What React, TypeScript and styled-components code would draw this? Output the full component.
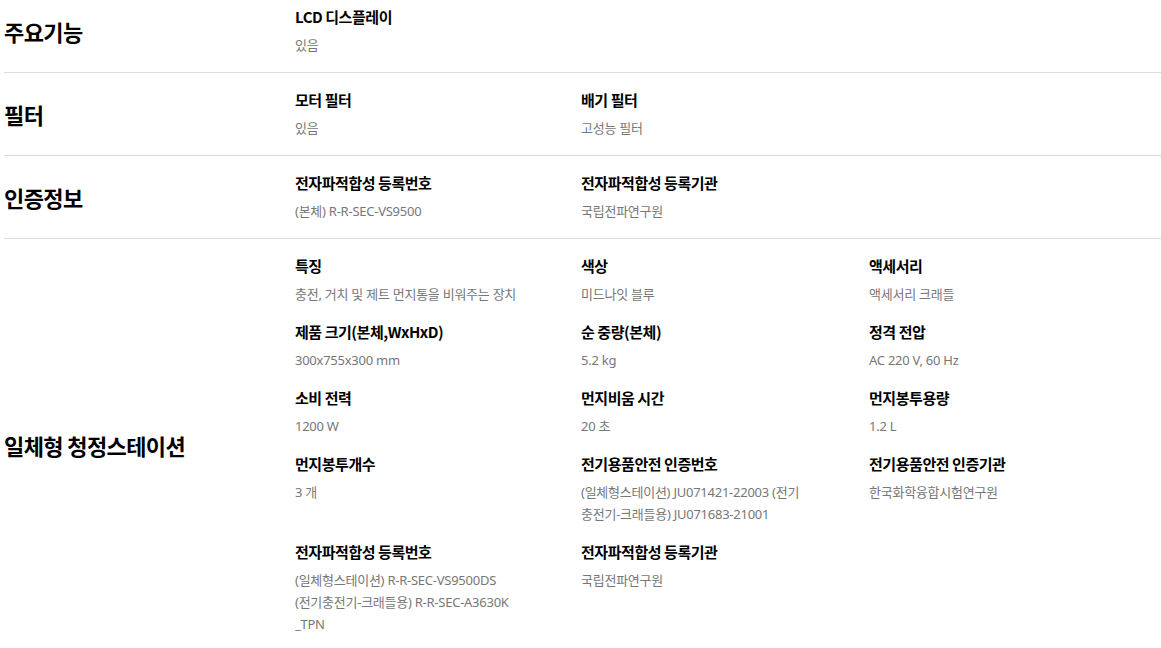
import React from "react";
import styled, { createGlobalStyle } from "styled-components";

const Global = createGlobalStyle`
  html, body { margin: 0; padding: 0; background: #fff; }
  body { font-family: "Noto Sans CJK KR", "Noto Sans", sans-serif; color: #000; }
`;

const Page = styled.div`
  margin-top: -10px;
  padding-left: 4px;
  overflow: hidden;
`;

const Section = styled.section<{ $last?: boolean }>`
  display: grid;
  grid-template-columns: 291px 1fr;
  align-items: center;
  padding: 16px 0;
  border-bottom: ${(p) => (p.$last ? "none" : "1px solid #dcdcdc")};
`;

const Label = styled.h2`
  margin: 0;
  font-size: 22px;
  font-weight: 700;
  letter-spacing: -0.6px;
  line-height: 30px;
`;

const Grid = styled.dl`
  margin: 0;
  display: grid;
  grid-template-columns: 286px 288px 1fr;
  row-gap: 16px;
  align-self: start;
`;

const Item = styled.div`
  padding-right: 20px;
`;

const Title = styled.dt`
  font-size: 15px;
  font-weight: 700;
  line-height: 22px;
  letter-spacing: -0.45px;
  margin: 0 0 6px;
  white-space: nowrap;
`;

const Value = styled.dd`
  margin: 0;
  font-family: "Noto Sans", "Noto Sans CJK KR", sans-serif;
  font-size: 13px;
  line-height: 22px;
  color: #777;
  letter-spacing: -0.25px;
`;

const Line = styled.span`
  display: block;
  white-space: nowrap;
`;

type Spec = { t: string; v: string[] };
type Group = { label: string; items: Spec[] };

const data: Group[] = [
  { label: "주요기능", items: [{ t: "LCD 디스플레이", v: ["있음"] }] },
  {
    label: "필터",
    items: [
      { t: "모터 필터", v: ["있음"] },
      { t: "배기 필터", v: ["고성능 필터"] },
    ],
  },
  {
    label: "인증정보",
    items: [
      { t: "전자파적합성 등록번호", v: ["(본체) R-R-SEC-VS9500"] },
      { t: "전자파적합성 등록기관", v: ["국립전파연구원"] },
    ],
  },
  {
    label: "일체형 청정스테이션",
    items: [
      { t: "특징", v: ["충전, 거치 및 제트 먼지통을 비워주는 장치"] },
      { t: "색상", v: ["미드나잇 블루"] },
      { t: "액세서리", v: ["액세서리 크래들"] },
      { t: "제품 크기(본체,WxHxD)", v: ["300x755x300 mm"] },
      { t: "순 중량(본체)", v: ["5.2 kg"] },
      { t: "정격 전압", v: ["AC 220 V, 60 Hz"] },
      { t: "소비 전력", v: ["1200 W"] },
      { t: "먼지비움 시간", v: ["20 초"] },
      { t: "먼지봉투용량", v: ["1.2 L"] },
      { t: "먼지봉투개수", v: ["3 개"] },
      {
        t: "전기용품안전 인증번호",
        v: ["(일체형스테이션) JU071421-22003 (전기", "충전기-크래들용) JU071683-21001"],
      },
      { t: "전기용품안전 인증기관", v: ["한국화학융합시험연구원"] },
      {
        t: "전자파적합성 등록번호",
        v: ["(일체형스테이션) R-R-SEC-VS9500DS", "(전기충전기-크래들용) R-R-SEC-A3630K", "_TPN"],
      },
      { t: "전자파적합성 등록기관", v: ["국립전파연구원"] },
    ],
  },
];

export default function App() {
  return (
    <Page>
      <Global />
      {data.map((g, i) => (
        <Section key={g.label} $last={i === data.length - 1}>
          <Label>{g.label}</Label>
          <Grid>
            {g.items.map((it, j) => (
              <Item key={j}>
                <Title>{it.t}</Title>
                <Value>
                  {it.v.map((l, k) => (
                    <Line key={k}>{l}</Line>
                  ))}
                </Value>
              </Item>
            ))}
          </Grid>
        </Section>
      ))}
    </Page>
  );
}
